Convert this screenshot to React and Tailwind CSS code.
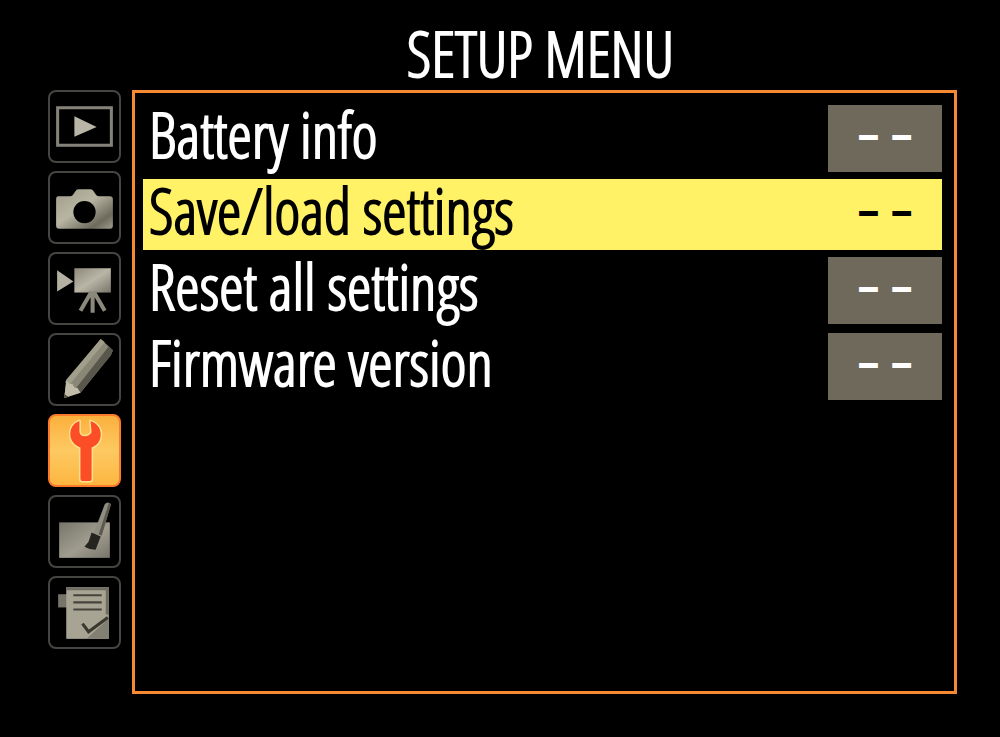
import React, { useState } from 'react';

const PlayIcon = () => (
  <svg viewBox="0 0 72 72" className="w-full h-full" aria-hidden="true">
    <rect x="9.5" y="17.5" width="53" height="37" fill="none" stroke="#85827a" strokeWidth="3" />
    <path d="M26 26 L48 36.5 L26 46 Z" fill="#b9b5a7" />
  </svg>
);

const CameraIcon = () => (
  <svg viewBox="0 0 72 72" className="w-full h-full" aria-hidden="true">
    <defs>
      <linearGradient id="cameraBody" x1="0" y1="0" x2="1" y2="1">
        <stop offset="0" stopColor="#a09c8a" />
        <stop offset="0.45" stopColor="#b9b5a3" />
        <stop offset="0.8" stopColor="#6d6a5c" />
        <stop offset="1" stopColor="#a19d8d" />
      </linearGradient>
    </defs>
    <path
      d="M10 25 H22 Q24 25 25 23 L27 20 Q28 18 30 18 H42 Q44 18 45 20 L47 23 Q48 25 50 25 H61 Q64 25 64 28 V54 Q64 57 61 57 H11 Q8 57 8 54 V28 Q8 25 10 25 Z"
      fill="url(#cameraBody)"
    />
    <circle cx="36" cy="40.5" r="11" fill="#000" />
  </svg>
);

const MovieIcon = () => (
  <svg viewBox="0 0 72 72" className="w-full h-full" aria-hidden="true">
    <defs>
      <linearGradient id="movieBody" x1="0" y1="0" x2="1" y2="1">
        <stop offset="0" stopColor="#8b887a" />
        <stop offset="0.5" stopColor="#bab6a6" />
        <stop offset="1" stopColor="#77746a" />
      </linearGradient>
    </defs>
    <path d="M9 18 L25 29 L9 39 Z" fill="#b5b1a2" />
    <rect x="26" y="16" width="36" height="24" fill="url(#movieBody)" />
    <path d="M43 39 L32 58 M44 39 V60 M45 39 L56 58" stroke="#8b887c" strokeWidth="4" fill="none" />
  </svg>
);

const PencilIcon = () => (
  <svg viewBox="0 0 72 72" className="w-full h-full" aria-hidden="true">
    <path d="M52 6 L64 17 L62 22 L32 59 L16 64 L18 47 Z" fill="#8b8777" />
    <path d="M52 6 L56 9 L22 50 L17 49 L18 46 Z" fill="#a29e8c" />
    <path d="M60 13 L64 17 L62 22 L32 59 L28 54 Z" fill="#59564b" />
    <path d="M18 47 Q21 51 24 50 Q26 55 29 54 L32 59 L16 64 Z" fill="#c0bca9" />
    <path d="M16 60 L20 63 L16 64 Z" fill="#4b493f" />
  </svg>
);

const WrenchIcon = () => (
  <svg viewBox="0 0 72 72" className="w-full h-full" aria-hidden="true">
    <path
      d="M31 7 C25 9 22 14 22 20 C22 26 26 31 32 33 V64 Q32 66 34 66 H41 Q43 66 43 64 V33 C49 31 52 26 52 20 C52 14 48 9 42 7 L43 18 Q41 22 36 22 Q32 22 31 18 Z"
      fill="#fb4d26"
      stroke="#ffe08c"
      strokeWidth="3"
      strokeLinejoin="round"
      paintOrder="stroke"
    />
  </svg>
);

const RetouchIcon = () => (
  <svg viewBox="0 0 72 72" className="w-full h-full" aria-hidden="true">
    <defs>
      <linearGradient id="canvasFill" x1="0" y1="0" x2="1" y2="1">
        <stop offset="0" stopColor="#77756a" />
        <stop offset="0.55" stopColor="#a09d8f" />
        <stop offset="1" stopColor="#77746a" />
      </linearGradient>
    </defs>
    <rect x="11" y="27" width="50" height="35" fill="url(#canvasFill)" />
    <path d="M56 9 Q59 6 62 9 L53 40 L45 38 Z" fill="#8f8c80" />
    <path d="M60 8 Q62 8 62 10 L53 40 L50 39 Z" fill="#5a584f" />
    <path d="M43 37 L52 41 L47 54 Q41 54 36 51 L40 46 Z" fill="#25241f" />
  </svg>
);

const MyMenuIcon = () => (
  <svg viewBox="0 0 72 72" className="w-full h-full" aria-hidden="true">
    <rect x="10" y="18" width="10" height="13" fill="#77746a" />
    <rect x="18" y="11" width="42" height="51" fill="#a8a494" />
    <path d="M18 11 H60 V38 H57 V14 H18 Z" fill="#706d62" />
    <path d="M60 42 V62 H38 Z" fill="#828073" />
    <path d="M25 19 H53 M25 26 H53 M25 33 H53" stroke="#45433b" strokeWidth="2" />
    <path d="M34 47 L40 55 L59 41" fill="none" stroke="#3a382f" strokeWidth="3" />
  </svg>
);

const tabs = [
  { id: 'playback', label: 'Playback menu', Icon: PlayIcon },
  { id: 'shooting', label: 'Photo shooting menu', Icon: CameraIcon },
  { id: 'movie', label: 'Movie shooting menu', Icon: MovieIcon },
  { id: 'custom', label: 'Custom settings', Icon: PencilIcon },
  { id: 'setup', label: 'Setup menu', Icon: WrenchIcon },
  { id: 'retouch', label: 'Retouch menu', Icon: RetouchIcon },
  { id: 'mymenu', label: 'My menu', Icon: MyMenuIcon },
];

const items = ['Battery info', 'Save/load settings', 'Reset all settings', 'Firmware version'];

const App = () => {
  const [activeTab, setActiveTab] = useState('setup');
  const [selected, setSelected] = useState('Save/load settings');

  return (
    <div className="min-h-screen bg-black text-white flex flex-col pl-12 pr-[43px] pb-[43px] text-[62px] leading-[70px] font-bold font-['Open_Sans_Condensed_Light','Open_Sans_Condensed','Open_Sans',sans-serif]">
      <h1 className="h-[90px] pt-[18px] pl-19 text-center whitespace-nowrap">SETUP MENU</h1>

      <div className="flex-1 flex gap-[11px]">
        {/* Menu tabs */}
        <nav className="flex flex-col gap-2 w-[73px] shrink-0">
          {tabs.map(({ id, label, Icon }) => (
            <button
              key={id}
              aria-label={label}
              onClick={() => setActiveTab(id)}
              className={`w-full h-[73px] rounded-lg border-2 ${
                activeTab === id
                  ? 'border-[#fb7a2c] bg-linear-to-b from-[#fbb03c] via-[#fdc961] to-[#fdb640]'
                  : 'border-[#454542] bg-black'
              }`}
            >
              <span className="block -m-0.5">
                <Icon />
              </span>
            </button>
          ))}
        </nav>

        {/* Menu items */}
        <main className="flex-1 min-w-0 border-[3px] border-[#f58a33] pt-2.5 pl-2 pr-3">
          <ul className="flex flex-col gap-[5px]">
            {items.map((item) => (
              <li key={item}>
                <button
                  onClick={() => setSelected(item)}
                  className={`w-full h-[71px] flex items-center justify-between pl-1.5 text-left whitespace-nowrap ${
                    selected === item ? 'bg-[#fff267] text-black' : ''
                  }`}
                >
                  <span className="pb-2.5">{item}</span>
                  <span
                    className={`w-[114px] h-[67px] pb-3.5 flex items-center justify-center text-[46px] font-['Open_Sans_Condensed','Open_Sans',sans-serif] ${
                      selected === item ? '' : 'bg-[#6f695c]'
                    }`}
                  >
                    – –
                  </span>
                </button>
              </li>
            ))}
          </ul>
        </main>
      </div>
    </div>
  );
};

export default App;
